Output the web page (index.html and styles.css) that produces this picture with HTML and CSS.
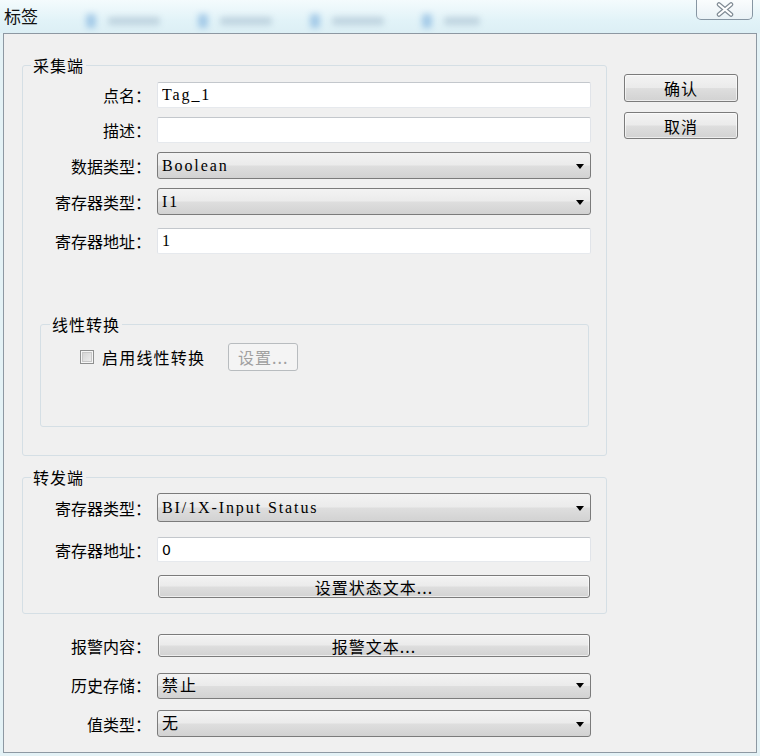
FILE: index.html
```html
<!DOCTYPE html>
<html lang="zh-CN">
<head>
    <meta charset="UTF-8">
    <title>标签</title>
    <link rel="stylesheet" href="styles.css">
</head>
<body>
    <div class="titlebar">
        <span class="title">标签</span>
        <div class="ghost-strip">
            <span class="ghost"><i class="ghost-icon"></i><b class="ghost-text"></b></span>
            <span class="ghost"><i class="ghost-icon"></i><b class="ghost-text"></b></span>
            <span class="ghost"><i class="ghost-icon"></i><b class="ghost-text"></b></span>
            <span class="ghost"><i class="ghost-icon"></i><b class="ghost-text short"></b></span>
        </div>
        <button class="close-btn" title="关闭">
            <svg width="18" height="15" viewBox="0 0 18 15">
                <path d="M3 2.5 L15 12.5 M15 2.5 L3 12.5" stroke="#7f8a94" stroke-width="4.5" stroke-linecap="round"/>
                <path d="M3 2.5 L15 12.5 M15 2.5 L3 12.5" stroke="#ffffff" stroke-width="2.2" stroke-linecap="round"/>
            </svg>
        </button>
    </div>

    <div class="dialog">
        <div class="main">
            <fieldset class="group group-collect">
                <legend>采集端</legend>
                <div class="row row-1">
                    <label>点名：</label>
                    <input class="field" type="text" value="Tag_1">
                </div>
                <div class="row row-2">
                    <label>描述：</label>
                    <input class="field" type="text" value="">
                </div>
                <div class="row row-3">
                    <label>数据类型：</label>
                    <div class="combo"><select><option>Boolean</option></select></div>
                </div>
                <div class="row row-4">
                    <label>寄存器类型：</label>
                    <div class="combo"><select><option>I1</option></select></div>
                </div>
                <div class="row row-5">
                    <label>寄存器地址：</label>
                    <input class="field" type="text" value="1">
                </div>

                <fieldset class="group group-linear">
                    <legend>线性转换</legend>
                    <div class="check-row">
                        <span class="checkbox"></span>
                        <span class="check-label">启用线性转换</span>
                        <button class="btn-disabled" disabled>设置...</button>
                    </div>
                </fieldset>
            </fieldset>

            <fieldset class="group group-forward">
                <legend>转发端</legend>
                <div class="row fw-1">
                    <label>寄存器类型：</label>
                    <div class="combo"><select><option>BI/1X-Input Status</option></select></div>
                </div>
                <div class="row fw-2">
                    <label>寄存器地址：</label>
                    <input class="field field-sans" type="text" value="0">
                </div>
                <div class="row fw-3">
                    <label></label>
                    <button class="btn btn-wide">设置状态文本...</button>
                </div>
            </fieldset>

            <div class="extra">
                <div class="row ex-1">
                    <label>报警内容：</label>
                    <button class="btn btn-wide">报警文本...</button>
                </div>
                <div class="row ex-2">
                    <label>历史存储：</label>
                    <div class="combo"><select><option>禁止</option></select></div>
                </div>
                <div class="row ex-3">
                    <label>值类型：</label>
                    <div class="combo"><select><option>无</option></select></div>
                </div>
            </div>
        </div>

        <div class="side">
            <button class="btn btn-ok">确认</button>
            <button class="btn btn-cancel">取消</button>
        </div>
    </div>
</body>
</html>
```

FILE: styles.css
```css
* { box-sizing: border-box; }
body { margin: 0; width: 760px; height: 756px; overflow: hidden; background: #e4f2f6; font-family: "Noto Sans CJK SC", sans-serif; font-size: 16px; color: #000; }

/* title bar (aero glass, blurred taskbar behind) */
.titlebar { height: 33px; display: flex; align-items: flex-start; background: linear-gradient(#f4fbfd, #e2f3f8 60%, #dceff5); overflow: hidden; }
.title { margin: 6px 0 0 4px; font-size: 17px; line-height: 20px; color: #111; white-space: nowrap; }
.ghost-strip { flex: 1; display: flex; gap: 38px; padding: 14px 0 0 48px; filter: blur(3px); opacity: 0.4; }
.ghost { display: flex; align-items: center; gap: 12px; }
.ghost-icon { width: 10px; height: 14px; background: #4a8fd0; border-radius: 2px; }
.ghost-text { width: 52px; height: 8px; background: #8aa4bb; border-radius: 3px; }
.ghost-text.short { width: 36px; }
.close-btn { width: 57px; height: 21px; margin: -1px 7px 0 0; padding: 0; border: 1px solid #8796a3; border-top: none; border-radius: 0 0 5px 5px; background: linear-gradient(#fbfdfe, #eaf2f6); display: flex; align-items: center; justify-content: center; }

/* dialog body */
.dialog { margin: 0 3px; height: 720px; border: 1px solid #8d98a2; background: #f0f0f0; display: flex; align-items: flex-start; }
.main { margin-left: 18px; width: 585px; }
.side { margin: 40px 0 0 17px; width: 114px; display: flex; flex-direction: column; gap: 10px; }

/* group boxes */
.group { margin: 0; min-width: 0; border: 1px solid #d5dfe5; border-radius: 3px; }
.group legend { padding: 0 2px; line-height: 18px; font-size: 16px; letter-spacing: 1px; }
.group-collect { margin-top: 22px; padding: 0 15px 28px 0; }
.group-collect > legend { margin-left: 8px; }
.group-linear { margin: 61px 2px 0 17px; padding: 10px 0 55px 39px; }
.group-linear > legend { margin-left: -30px; }
.group-forward { margin-top: 12px; padding: 0 15px 15px 0; }
.group-forward > legend { margin-left: 8px; }

/* form rows */
.row { display: flex; align-items: center; }
.row label { width: 134px; padding-right: 6px; text-align: right; white-space: nowrap; line-height: 20px; }
.row-1 { margin-top: 8px; height: 26px; }
.row-2 { margin-top: 9px; height: 26px; }
.row-3 { margin-top: 9px; height: 27px; }
.row-4 { margin-top: 9px; height: 27px; }
.row-5 { margin-top: 13px; height: 26px; }
.fw-1 { margin-top: 7px; height: 29px; }
.fw-2 { margin-top: 15px; height: 25px; }
.fw-3 { margin-top: 13px; height: 23px; }
.extra { margin: 20px 16px 0 1px; }
.ex-1 { height: 23px; }
.ex-2 { margin-top: 15px; height: 26px; }
.ex-3 { margin-top: 12px; height: 27px; }

.field { flex: 1; height: 100%; margin: 0; padding: 0 4px; border: 1px solid; border-color: #c3c7cc #e1e4e9 #e6e9ed #e1e4e9; border-radius: 2px; background: #fff; font-family: "Liberation Serif", "Noto Sans CJK SC", serif; font-size: 16px; letter-spacing: 1.9px; color: #000; outline: none; }
.field-sans { font-family: "DejaVu Sans", sans-serif; font-size: 14px; letter-spacing: 0; }

.combo { flex: 1; height: 100%; position: relative; }
.combo select { width: 100%; height: 100%; margin: 0; padding: 0 0 0 4px; appearance: none; -webkit-appearance: none; border: 1px solid #7b7b7b; border-radius: 3px; background: linear-gradient(#f3f3f3, #ebebeb 48%, #dedede 52%, #d2d2d2); font-family: "Liberation Serif", "Noto Sans CJK SC", serif; font-size: 16px; letter-spacing: 1.9px; color: #000; outline: none; }
.combo::after { content: ""; position: absolute; right: 7px; top: 50%; margin-top: -2px; border-left: 4.5px solid transparent; border-right: 4.5px solid transparent; border-top: 5px solid #000; pointer-events: none; }

/* buttons */
.btn { height: 28px; margin: 0; padding: 0; border: 1px solid #7b7b7b; border-radius: 3px; background: linear-gradient(#f3f3f3, #ebebeb 48%, #dedede 52%, #d2d2d2); box-shadow: inset 0 0 0 1px rgba(255, 255, 255, 0.6); font-family: "Noto Sans CJK SC", sans-serif; font-size: 16px; line-height: 20px; letter-spacing: 1px; color: #000; }
.btn-wide { flex: 1; height: 100%; margin-left: 1px; margin-right: 1px; letter-spacing: 1px; }
.btn-cancel { height: 27px; }

/* linear conversion */
.check-row { display: flex; align-items: center; height: 28px; }
.checkbox { width: 14px; height: 14px; border: 1px solid #8e8f8f; background: linear-gradient(135deg, #cfcfcf, #f2f2f2); box-shadow: inset 0 0 0 1px #f6f6f6, inset 0 0 0 2px #c8c8c8; }
.check-label { margin-left: 8px; line-height: 20px; letter-spacing: 1.2px; }
.btn-disabled { margin-left: 23px; width: 70px; height: 28px; padding: 0; border: 1px solid #b8bcbf; border-radius: 3px; background: #f4f4f4; color: #a0a0a0; font-family: "Noto Sans CJK SC", sans-serif; font-size: 16px; letter-spacing: 1px; }
```
